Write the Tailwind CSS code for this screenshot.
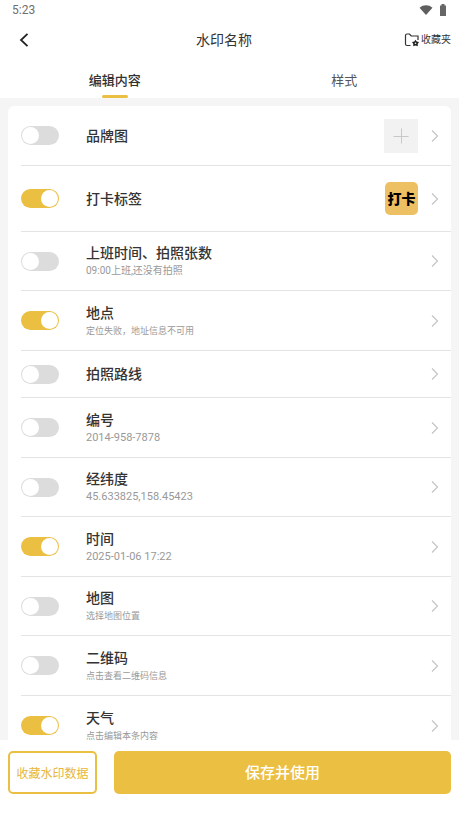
<!DOCTYPE html>
<html lang="zh-CN">
<head>
<meta charset="utf-8">
<meta name="viewport" content="width=device-width, initial-scale=1">
<title>水印名称</title>
<script src="https://cdn.jsdelivr.net/npm/@tailwindcss/browser@4"></script>
</head>
<body class="flex h-screen flex-col bg-white font-['Noto_Sans_CJK_SC',sans-serif] text-[#333]">
  <div class="flex h-5 shrink-0 items-center justify-between px-3 font-[Roboto,sans-serif] text-xs text-[#707070]">
    <span>5:23</span>
    <span class="flex items-center gap-1.5">
      <svg class="h-2.5 w-3.5" viewBox="0 0 14 10" fill="#5f5f5f" aria-hidden="true"><path d="M.5 2.800C4.200-.5 9.800-.5 13.500 2.800L7 10z"/></svg>
      <svg class="h-3 w-2" viewBox="0 0 8 12" fill="#666" aria-hidden="true"><path d="M2.500 0h3v1.500H7V12H1V1.500h1.500z"/></svg>
    </span>
  </div>

  <header class="flex h-10 shrink-0 items-center pr-2 pl-4">
    <button type="button" aria-label="返回" class="flex h-8 w-7 items-center">
      <svg class="h-4 w-4" viewBox="0 0 16 16" fill="none" stroke="#222" stroke-width="1.800" aria-hidden="true"><path d="M11.500 1.800 5 8l6.500 6.200"/></svg>
    </button>
    <h1 class="flex-1 pb-0.5 text-center text-sm">水印名称</h1>
    <button type="button" class="flex items-center gap-px text-[10px]">
      <svg class="h-4 w-4" viewBox="0 0 16 16" aria-hidden="true">
        <path d="M6.500 13.500H3Q1.500 13.500 1.500 12V3.500Q1.500 2 3 2h2.500l1.700 2H14v4" fill="none" stroke="#333" stroke-width="1.200"/>
        <path d="m11.500 7.700 1.200 1.800 2.300.6-1.300 1.900.1 2.300-2.300-.7-2.300.7.1-2.300L8 10.100l2.300-.6z" fill="#222"/>
        <circle cx="11.500" cy="11.300" r=".8" fill="#fff"/>
      </svg>
      <span class="pb-1">收藏夹</span>
    </button>
  </header>

  <nav class="grid shrink-0 grid-cols-2 text-[13px]" role="tablist">
    <button type="button" role="tab" aria-selected="true" class="flex flex-col items-center pt-2.5">
      <span class="h-[25px] leading-5 font-medium">编辑内容</span>
      <span class="h-[3px] w-[26px] rounded-full bg-[#ebbf42]"></span>
    </button>
    <button type="button" role="tab" aria-selected="false" class="flex flex-col items-center pt-2.5 text-[#555]">
      <span class="leading-5">样式</span>
    </button>
  </nav>

  <main class="min-h-0 flex-1 overflow-y-auto bg-[#f5f5f5] px-2 pt-2 [scrollbar-width:none]">
    <ul id="items" class="rounded-t-md bg-white pl-[13px]"></ul>
  </main>

  <footer class="flex shrink-0 gap-[17px] bg-white px-2 pt-[11px] pb-[23px]">
    <button type="button" class="h-[43px] w-[89px] shrink-0 rounded-[5px] border-2 border-[#ebbf42] text-xs text-[#e6b73a]">收藏水印数据</button>
    <button type="button" class="h-[43px] flex-1 rounded-[5px] bg-[#ebbf42] text-[15px] font-medium text-white">保存并使用</button>
  </footer>

  <script>
    const plus = `<button type="button" aria-label="添加品牌图" class="flex h-[34px] w-[34px] items-center justify-center bg-[#f2f2f2]">
      <svg class="h-4 w-4" viewBox="0 0 16 16" stroke="#c8c8c8" aria-hidden="true"><path d="M.5 8.500h15M8.500.5v15"/></svg></button>`;
    const stamp = `<span class="flex h-[33px] w-[33px] items-center justify-center rounded-[5px] bg-[#edc163] pb-0.5 text-sm font-black text-black">打卡</span>`;
    const items = [
      { title: '品牌图', extra: plus },
      { title: '打卡标签', on: true, extra: stamp, height: 'h-[66px]' },
      { title: '上班时间、拍照张数', sub: '09:00上班,还没有拍照', size: 'text-[10px]', height: 'h-[59px]' },
      { title: '地点', on: true, sub: '定位失败，地址信息不可用' },
      { title: '拍照路线', height: 'h-[47px]' },
      { title: '编号', sub: '2014-958-7878', size: 'text-[11px]' },
      { title: '经纬度', sub: '45.633825,158.45423', size: 'text-[11px]', height: 'h-[59px]' },
      { title: '时间', on: true, sub: '2025-01-06 17:22', size: 'text-[11px]' },
      { title: '地图', sub: '选择地图位置', height: 'h-[59px]' },
      { title: '二维码', sub: '点击查看二维码信息' },
      { title: '天气', on: true, sub: '点击编辑本条内容' },
    ];
    document.getElementById('items').innerHTML = items.map((item, i) => `
      <li class="flex ${item.height || 'h-[60px]'} items-center border-b border-[#e4e4e4] pr-3">
        <input id="item${i}" type="checkbox" ${item.on ? 'checked' : ''} class="flex h-[19px] w-[38px] shrink-0 appearance-none items-center rounded-full bg-[#dcdcdc] px-px before:h-[17px] before:w-[17px] before:rounded-full before:bg-white checked:justify-end checked:bg-[#ebbf42]">
        <div class="ml-[27px] min-w-0 flex-1">
          <label for="item${i}" class="block pb-0.5 text-sm leading-[18px] font-medium">${item.title}</label>
          ${item.sub ? `<p class="${item.size || 'text-[9px]'} font-[Roboto,'Noto_Sans_CJK_SC',sans-serif] leading-4 text-[#999]">${item.sub}</p>` : ''}
        </div>
        ${item.extra || ''}
        <button type="button" aria-label="编辑${item.title}" class="ml-[13px] flex h-6 w-2 items-center justify-center">
          <svg class="h-3 w-2" viewBox="0 0 8 12" fill="none" stroke="#c4c4c4" stroke-width="1.200" aria-hidden="true"><path d="m1 .5 5.500 5.500L1 11.500"/></svg>
        </button>
      </li>`).join('');
  </script>
</body>
</html>
